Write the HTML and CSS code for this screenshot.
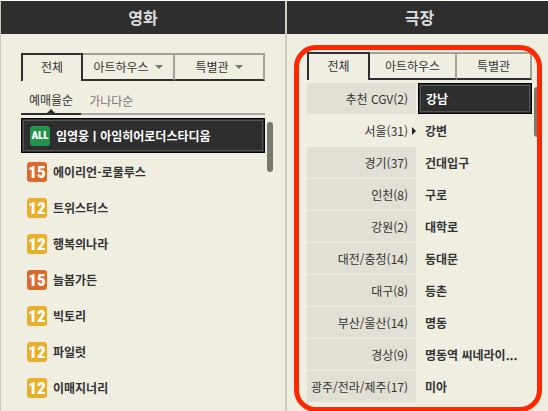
FILE: index.html
```html
<!DOCTYPE html>
<html lang="ko">
<head>
    <meta charset="UTF-8">
    <meta name="viewport" content="width=device-width, initial-scale=1.0">
    <title>영화 예매</title>
    <link rel="stylesheet" href="styles.css">
</head>
<body>
    <div class="booking">
        <section class="column movies">
            <h2>영화</h2>
            <div class="content">
                <div class="tabs movie-tabs">
                    <button type="button" class="tab selected">전체</button>
                    <button type="button" class="tab">아트하우스<span class="caret"></span></button>
                    <button type="button" class="tab">특별관<span class="caret"></span></button>
                </div>
                <div class="sort">
                    <button type="button" class="selected">예매율순</button>
                    <button type="button">가나다순</button>
                </div>
                <div class="movie-area">
                    <ul class="movie-list">
                        <li><a href="#" class="selected"><span class="grade all">ALL</span><span class="name">임영웅ㅣ아임히어로더스타디움</span></a></li>
                        <li><a href="#"><span class="grade g15">15</span><span class="name">에이리언-로물루스</span></a></li>
                        <li><a href="#"><span class="grade g12">12</span><span class="name">트위스터스</span></a></li>
                        <li><a href="#"><span class="grade g12">12</span><span class="name">행복의나라</span></a></li>
                        <li><a href="#"><span class="grade g15">15</span><span class="name">늘봄가든</span></a></li>
                        <li><a href="#"><span class="grade g12">12</span><span class="name">빅토리</span></a></li>
                        <li><a href="#"><span class="grade g12">12</span><span class="name">파일럿</span></a></li>
                        <li><a href="#"><span class="grade g12">12</span><span class="name">이매지너리</span></a></li>
                    </ul>
                    <div class="scrollbar"></div>
                </div>
            </div>
        </section>

        <section class="column theaters">
            <h2>극장</h2>
            <div class="content">
                <div class="tabs theater-tabs">
                    <button type="button" class="tab selected">전체</button>
                    <button type="button" class="tab">아트하우스</button>
                    <button type="button" class="tab">특별관</button>
                </div>
                <div class="theater-area">
                    <ul class="region-list">
                        <li><a href="#">추천 CGV(2)</a></li>
                        <li><a href="#" class="selected">서울(31)</a></li>
                        <li><a href="#">경기(37)</a></li>
                        <li><a href="#">인천(8)</a></li>
                        <li><a href="#">강원(2)</a></li>
                        <li><a href="#">대전/충청(14)</a></li>
                        <li><a href="#">대구(8)</a></li>
                        <li><a href="#">부산/울산(14)</a></li>
                        <li><a href="#">경상(9)</a></li>
                        <li><a href="#">광주/전라/제주(17)</a></li>
                    </ul>
                    <ul class="theater-list">
                        <li><a href="#" class="selected">강남</a></li>
                        <li><a href="#">강변</a></li>
                        <li><a href="#">건대입구</a></li>
                        <li><a href="#">구로</a></li>
                        <li><a href="#">대학로</a></li>
                        <li><a href="#">동대문</a></li>
                        <li><a href="#">등촌</a></li>
                        <li><a href="#">명동</a></li>
                        <li><a href="#">명동역 씨네라이...</a></li>
                        <li><a href="#">미아</a></li>
                    </ul>
                    <div class="scrollbar"></div>
                </div>
            </div>
            <div class="highlight"></div>
        </section>
    </div>
</body>
</html>
```

FILE: styles.css
```css
* {
    box-sizing: border-box;
}
body {
    margin: 0;
    background-color: #f0eee1;
    font-family: "Noto Sans CJK KR", sans-serif;
    font-size: 12px;
    line-height: 16px;
    color: #333;
}
ul {
    list-style: none;
    margin: 0;
    padding: 0;
}
a {
    color: inherit;
    text-decoration: none;
}
button {
    margin: 0;
    padding: 0;
    border: none;
    background: none;
    font: inherit;
    color: inherit;
    cursor: pointer;
}
.booking {
    display: grid;
    grid-template-columns: 11fr 10fr;
    height: 100vh;
    overflow: hidden;
    border-top: 1px solid #fdfcf5;
}
.column {
    position: relative;
    min-width: 0;
}
.movies {
    border-left: 1px solid #cbc9bc;
    border-right: 2px solid #cfcdc0;
}
h2 {
    margin: 0;
    background-color: #2e2e2e;
    color: #dddddd;
    font-size: 16px;
    line-height: 33px;
    text-align: center;
}
.theaters h2 {
    padding-left: 4px;
}
.content {
    padding: 19px 20px 0;
}
.theaters .content {
    padding: 18px 16px 0 20px;
}

/* tabs */
.tabs {
    display: grid;
    height: 28px;
}
.movie-tabs {
    grid-template-columns: 62fr 92fr 90fr;
}
.theater-tabs {
    grid-template-columns: 63fr 87fr 75fr;
}
.tab {
    display: flex;
    align-items: center;
    justify-content: center;
    gap: 6px;
    border-top: 2px solid #a3a296;
    border-right: 2px solid #a3a296;
    border-bottom: 2px solid #2e2e2e;
}
.tab.selected {
    padding-bottom: 2px;
    border: 2px solid #2e2e2e;
    border-bottom: none;
}
.caret {
    border: 4px solid transparent;
    border-top-color: #77766d;
    border-bottom: none;
}

/* sort order */
.sort {
    display: flex;
    height: 34px;
    border-bottom: 2px solid #aaaaa6;
}
.sort button {
    position: relative;
    height: 34px;
    padding: 5px 8px 0;
    color: #777;
}
.sort .selected {
    color: #333;
    border-bottom: 2px solid #2e2e2e;
}
.sort .selected::after {
    content: "";
    position: absolute;
    left: 50%;
    bottom: 0;
    margin-left: -4px;
    border: 4px solid transparent;
    border-top: none;
    border-bottom-color: #2e2e2e;
}

/* movies */
.movie-area {
    display: flex;
    gap: 2px;
    margin-right: -8px;
    padding-top: 3px;
}
.movie-list {
    flex: 1;
    font-weight: bold;
}
.movie-list li {
    height: 36px;
}
.movie-list a {
    display: flex;
    align-items: center;
    gap: 6px;
    height: 36px;
    padding: 0 6px;
    white-space: nowrap;
}
.movie-list .selected {
    height: 35px;
    padding: 0 8px;
    border: 1px solid #000;
    background-color: #2e2e2e;
    color: #fff;
    outline: 1px solid #555;
    outline-offset: -3px;
}
.grade {
    width: 20px;
    height: 20px;
    border-radius: 3px;
    color: #fff;
    font-family: "Roboto Condensed", Roboto, sans-serif;
    font-size: 17px;
    font-weight: 900;
    line-height: 20px;
    text-align: center;
}
.all {
    background-color: #23924a;
    font-size: 11px;
}
.g15 {
    background-color: #db6b2c;
}
.g12 {
    background-color: #e9af2a;
}
.scrollbar {
    width: 6px;
    height: 50px;
    margin-top: 4px;
    border-radius: 3px;
    background-color: #77786e;
}

/* theaters */
.theater-area {
    display: grid;
    grid-template-columns: 109fr 114fr 6px;
    column-gap: 2px;
    margin-right: -8px;
    padding-top: 3px;
}
.region-list li,
.theater-list li {
    height: 32px;
}
.region-list a,
.theater-list a {
    display: flex;
    align-items: center;
    height: 31px;
    white-space: nowrap;
}
.region-list a {
    justify-content: flex-end;
    padding-right: 8px;
    background-color: #e2e0d4;
}
.region-list .selected {
    gap: 4px;
    padding-right: 0;
    background: none;
}
.region-list .selected::after {
    content: "";
    border: 4px solid transparent;
    border-left-color: #222;
    border-right: none;
}
.theater-list {
    font-weight: bold;
}
.theater-list a {
    padding-left: 7px;
}
.theater-list .selected {
    border: 1px solid #000;
    background-color: #2e2e2e;
    color: #fff;
    outline: 1px solid #555;
    outline-offset: -3px;
}

/* red frame over the theater column */
.highlight {
    position: absolute;
    top: 44px;
    left: 7px;
    right: 6px;
    height: 367px;
    border: 5px solid #ff2600;
    border-radius: 22px;
    pointer-events: none;
}
```
